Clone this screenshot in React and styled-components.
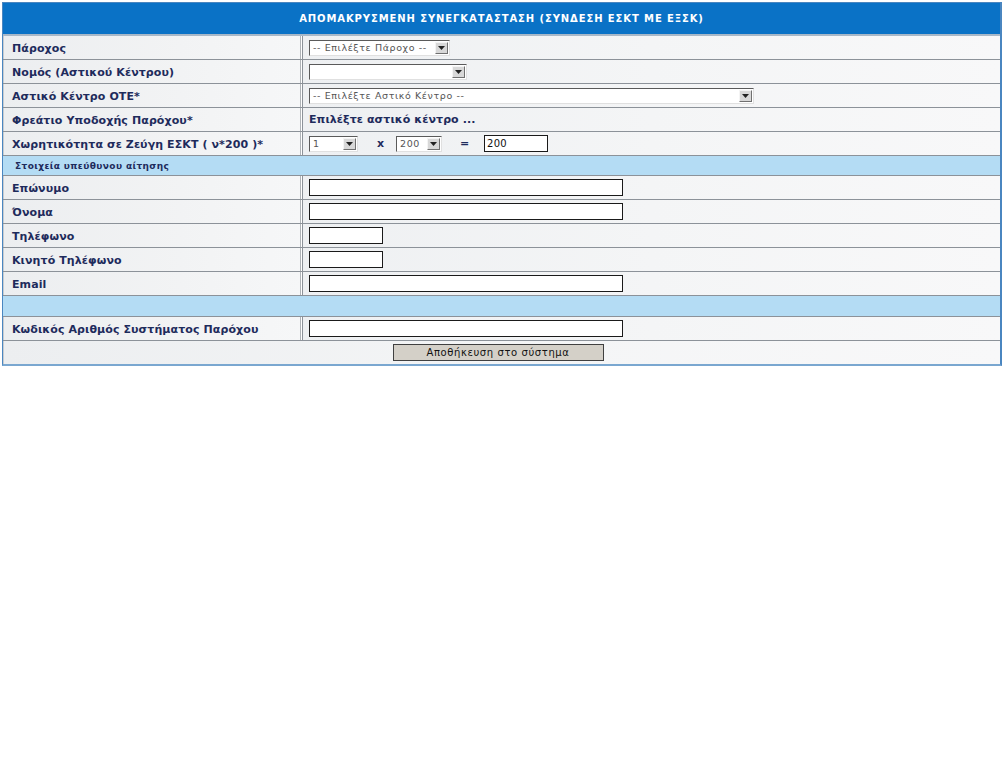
import React from "react";
import styled, { createGlobalStyle } from "styled-components";

const Global = createGlobalStyle`
  html, body { margin: 0; padding: 0; background: #ffffff; }
  body { font-family: "DejaVu Sans", Verdana, sans-serif; }
`;

const Page = styled.div`
  padding: 2px 1px 0 2px;
`;

const Frame = styled.div`
  width: 997px;
  border: 1px solid #4a86c0;
  border-right-width: 2px;
  border-bottom-width: 2px;
  border-bottom-color: #7aa7d0;
  background: #ffffff;
`;

const Header = styled.div`
  height: 31px;
  background: #0a72c6;
  color: #ffffff;
  font-size: 10px;
  font-weight: bold;
  letter-spacing: 0.9px;
  display: flex;
  align-items: center;
  justify-content: center;
  border-bottom: 2px solid #a8b8c8;
`;

const Row = styled.div`
  display: grid;
  grid-template-columns: 298px 1fr;
  height: 24px;
  border-bottom: 1px solid #8c9299;
  box-sizing: border-box;
  &:last-child { border-bottom: none; height: 23px; }
`;

const LabelCell = styled.div`
  display: flex;
  align-items: center;
  padding-left: 8px;
  padding-top: 1px;
  border-left: 1px solid #c8ccd0;
  border-right: 1px solid #b0b4b8;
  background: linear-gradient(90deg, #eceef0 0%, #f2f3f4 60%, #f6f7f8 100%);
  color: #1e2b5c;
  font-size: 11px;
  font-weight: bold;
  letter-spacing: 0.1px;
  white-space: nowrap;
`;

const ValueCell = styled.div`
  display: flex;
  align-items: center;
  padding-left: 6px;
  border-left: 1px solid #8c9299;
  margin-left: 1px;
  background: linear-gradient(90deg, #eef0f2 0%, #f4f5f6 50%, #f8f8f9 100%);
  color: #1e2b5c;
  font-size: 11px;
  font-weight: bold;
  letter-spacing: 0.1px;
`;

const FullCell = styled.div`
  grid-column: 1 / span 2;
  display: flex;
  align-items: center;
  justify-content: center;
  border-left: 1px solid #c8ccd0;
  background: linear-gradient(90deg, #eceef0 0%, #f4f5f6 50%, #f8f8f9 100%);
`;

const Section = styled.div`
  height: ${(p) => p.$h}px;
  box-sizing: border-box;
  background: #b4dcf4;
  border-bottom: 1px solid #8c9299;
  display: flex;
  align-items: center;
  padding-left: 12px;
  color: #1e2b5c;
  font-size: 9px;
  font-weight: bold;
  letter-spacing: 0.4px;
`;

const SelectBox = styled.div`
  width: ${(p) => p.$w}px;
  height: 16px;
  box-sizing: border-box;
  display: flex;
  align-items: center;
  background: #ffffff;
  border-top: 1px solid #5a5a5a;
  border-left: 1px solid #5a5a5a;
  border-right: 1px solid #e0e0e0;
  border-bottom: 1px solid #e0e0e0;
  font-weight: normal;
  letter-spacing: 0.6px;
  color: #555555;
  font-size: 9.5px;
`;

const SelectText = styled.span`
  flex: 1;
  padding-left: 3px;
  white-space: nowrap;
  overflow: hidden;
`;

const SelectButton = styled.span`
  width: 13px;
  height: 12px;
  margin-right: 1px;
  box-sizing: border-box;
  background: #d8d8d8;
  border-top: 1px solid #f4f4f4;
  border-left: 1px solid #f4f4f4;
  border-right: 1px solid #707070;
  border-bottom: 1px solid #707070;
  display: flex;
  align-items: center;
  justify-content: center;
`;

const TextInput = styled.div`
  width: ${(p) => p.$w}px;
  height: 17px;
  box-sizing: border-box;
  background: #ffffff;
  border: 1px solid #1a1a1a;
  display: flex;
  align-items: center;
  padding-left: 2px;
  font-weight: normal;
  letter-spacing: 0.3px;
  color: #111111;
  font-size: 10px;
`;

const Op = styled.span`
  width: ${(p) => p.$w}px;
  box-sizing: border-box;
  padding-left: ${(p) => p.$pad}px;
  color: #1e2b5c;
  font-size: 11px;
`;

const Button = styled.div`
  width: 211px;
  height: 17px;
  box-sizing: border-box;
  background: #d4d0c8;
  border: 1px solid #404040;
  display: flex;
  align-items: center;
  justify-content: center;
  color: #111111;
  font-size: 10px;
  letter-spacing: 0.6px;
  margin-left: -8px;
`;

const Arrow = () => (
  <svg width="7" height="4" viewBox="0 0 7 4">
    <path d="M0 0 L7 0 L3.5 4 Z" fill="#222" />
  </svg>
);

const Select = ({ w, text }) => (
  <SelectBox $w={w}>
    <SelectText>{text}</SelectText>
    <SelectButton>
      <Arrow />
    </SelectButton>
  </SelectBox>
);

const Field = ({ label, children }) => (
  <Row>
    <LabelCell>{label}</LabelCell>
    <ValueCell>{children}</ValueCell>
  </Row>
);

export default function App() {
  return (
    <Page>
      <Global />
      <Frame>
        <Header>ΑΠΟΜΑΚΡΥΣΜΕΝΗ ΣΥΝΕΓΚΑΤΑΣΤΑΣΗ (ΣΥΝΔΕΣΗ ΕΣΚΤ ΜΕ ΕΞΣΚ)</Header>
        <Field label="Πάροχος">
          <Select w={141} text="-- Επιλέξτε Πάροχο --" />
        </Field>
        <Field label="Νομός (Αστικού Κέντρου)">
          <Select w={158} text="" />
        </Field>
        <Field label="Αστικό Κέντρο ΟΤΕ*">
          <Select w={445} text="-- Επιλέξτε Αστικό Κέντρο --" />
        </Field>
        <Field label="Φρεάτιο Υποδοχής Παρόχου*">Επιλέξτε αστικό κέντρο ...</Field>
        <Field label="Χωρητικότητα σε Ζεύγη ΕΣΚΤ ( ν*200 )*">
          <Select w={49} text="1" />
          <Op $w={38} $pad={19}>x</Op>
          <Select w={46} text="200" />
          <Op $w={42} $pad={18}>=</Op>
          <TextInput $w={64}>200</TextInput>
        </Field>
        <Section $h={20}>Στοιχεία υπεύθυνου αίτησης</Section>
        <Field label="Επώνυμο">
          <TextInput $w={314} />
        </Field>
        <Field label="Όνομα">
          <TextInput $w={314} />
        </Field>
        <Field label="Τηλέφωνο">
          <TextInput $w={74} />
        </Field>
        <Field label="Κινητό Τηλέφωνο">
          <TextInput $w={74} />
        </Field>
        <Field label="Email">
          <TextInput $w={314} />
        </Field>
        <Section $h={21} />
        <Field label="Κωδικός Αριθμός Συστήματος Παρόχου">
          <TextInput $w={314} />
        </Field>
        <Row>
          <FullCell>
            <Button>Αποθήκευση στο σύστημα</Button>
          </FullCell>
        </Row>
      </Frame>
    </Page>
  );
}
